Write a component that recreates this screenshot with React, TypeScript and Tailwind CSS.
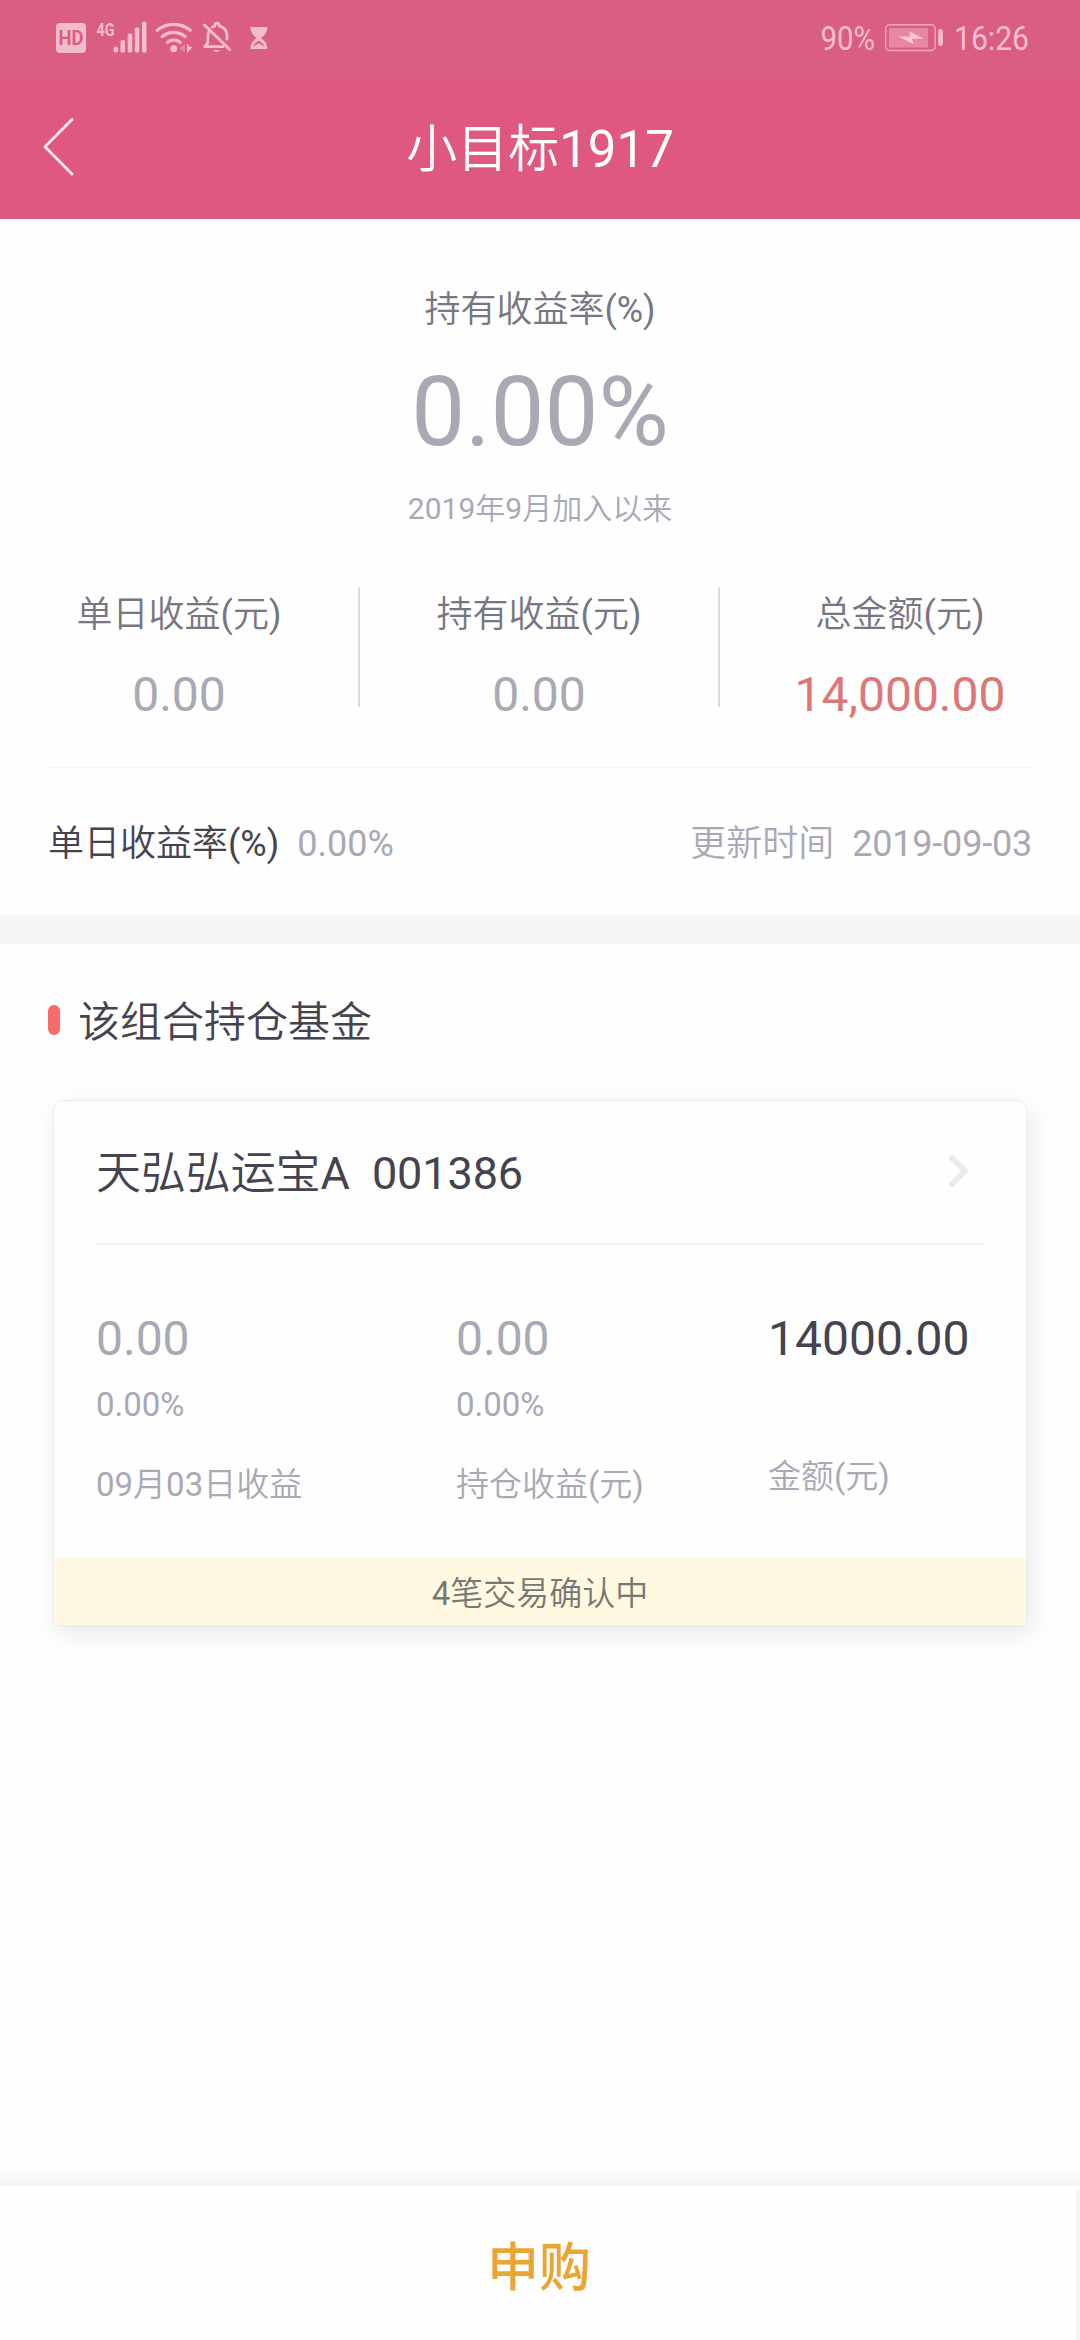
import React from "react";

interface Summary {
  label: string;
  value: string;
  highlight?: boolean;
}

const summaries: Summary[] = [
  { label: "单日收益(元)", value: "0.00" },
  { label: "持有收益(元)", value: "0.00" },
  { label: "总金额(元)", value: "14,000.00", highlight: true },
];

function StatusBar() {
  return (
    <div className="flex h-[77px] items-start justify-between bg-[#da5e82] text-[#f9bdd0]">
      <svg width="300" height="77" viewBox="0 0 300 77" fill="currentColor">
        <rect x="56" y="23" width="30" height="30" rx="4" fill="#f3bccd" />
        <text
          x="58.5"
          y="45"
          fontSize="19.5"
          fontWeight="700"
          textLength="25"
          lengthAdjust="spacingAndGlyphs"
          fill="#da5e82"
        >
          HD
        </text>
        <text
          x="96.5"
          y="35.5"
          fontSize="18.5"
          fontWeight="700"
          textLength="18"
          lengthAdjust="spacingAndGlyphs"
        >
          4G
        </text>
        {/* Signal bars */}
        <rect x="113.5" y="46.5" width="4.5" height="6" rx="2" />
        <rect x="120.5" y="40" width="4.5" height="12.5" rx="1.5" />
        <rect x="127.7" y="33.5" width="4.5" height="19" rx="1.5" />
        <rect x="134.8" y="27.5" width="4.5" height="25" rx="1.5" />
        <rect x="142" y="21.5" width="4.5" height="31" rx="1.5" />
        {/* Wifi */}
        <g fill="none" stroke="currentColor" strokeWidth="3.2" strokeLinecap="round">
          <path d="M157.2 30.3a26 26 0 0 1 33 0" />
          <path d="M162.2 36.6a18 18 0 0 1 23 0" />
          <path d="M167.5 42.2a10.5 10.5 0 0 1 12.6 0" />
        </g>
        <circle cx="173.7" cy="48.7" r="3.4" />
        <path d="M185 44v8.5l-6-4.2z" opacity="0.4" />
        <path d="M187 43.500l2.500 3.500h3l-2.500 3-3 3z" />
        {/* Muted bell */}
        <g
          fill="none"
          stroke="currentColor"
          strokeWidth="2.8"
          strokeLinecap="round"
          strokeLinejoin="round"
        >
          <path d="M204.6 25l25 24.5" />
          <path d="M209 31.5c-1 2-1.2 4-1.2 6v5.500l-3 3.700h18" />
          <path d="M212.2 27.2l2.5-1.300c.2-2.200 1.200-2.700 2.300-2.700s2.100.5 2.300 2.700c4.800 1.500 7.700 5 7.700 10v3.300" />
        </g>
        <path d="M213.5 50h6.5c-1 2.600-5.500 2.600-6.500 0z" />
        {/* Hourglass */}
        <g fill="#f3bccd">
          <path d="M250.5 27h16.7v1.500c-.6 5-3.300 7.600-6.400 9.500 3.100 2 5.800 4.600 6.400 9.500V49h-16.700v-1.500c.6-4.900 3.300-7.500 6.400-9.500-3.100-1.900-5.800-4.500-6.400-9.500z" />
          <path
            d="M253.5 46.500c.7-2.800 2.500-4.200 5.300-5.800 2.900 1.600 4.700 3 5.400 5.800l-5.400-3.300z"
            fill="#da5e82"
          />
        </g>
      </svg>

      <svg width="300" height="77" viewBox="0 0 300 77" fill="currentColor">
        <text
          x="40.5"
          y="50"
          fontSize="34"
          textLength="54.5"
          lengthAdjust="spacingAndGlyphs"
        >
          90%
        </text>
        <rect
          x="105.7"
          y="24.7"
          width="49.5"
          height="25.8"
          rx="4"
          fill="none"
          stroke="currentColor"
          strokeWidth="1.4"
          opacity="0.8"
        />
        <rect x="109" y="28" width="39" height="19.5" fill="#e787a4" />
        <path d="M118.5 36.500H130.5l-1.500-5.500 14.500 7.800H132l1.500 5.400z" fill="#fbc6d6" />
        <rect x="158.2" y="29" width="4.6" height="17" rx="2" />
        <text
          x="174"
          y="50"
          fontSize="34"
          textLength="75"
          lengthAdjust="spacingAndGlyphs"
        >
          16:26
        </text>
      </svg>
    </div>
  );
}

function Header() {
  return (
    <div className="flex h-[142px] items-center bg-[#df587f] text-white">
      <svg
        className="ml-[41px]"
        width="34"
        height="62"
        viewBox="0 0 34 62"
        fill="none"
        stroke="#ffe9f1"
        strokeWidth="2.8"
        strokeLinecap="round"
        strokeLinejoin="round"
      >
        <path d="M31 2.500L4 29.700L31 57" />
      </svg>
      <h1 className="flex-1 pt-[4px] pr-[75px] text-center text-[51px] leading-[60px]">
        小目标1917
      </h1>
    </div>
  );
}

function Overview() {
  return (
    <section className="h-[696px] pt-[67px]">
      <div className="flex flex-col items-center">
        <p className="text-[36px] leading-[48px] text-[#787682]">持有收益率(%)</p>
        <p className="mt-[23px] text-[96px] leading-[110px] text-[#a9a8b5]">0.00%</p>
        <p className="mt-5 text-[30px] leading-[44px] text-[#a9a8b5]">2019年9月加入以来</p>
      </div>

      <div className="mt-14 grid grid-cols-3 grid-rows-[120px]">
        {summaries.map((item) => (
          <div
            key={item.label}
            className="border-r-2 border-[#dddddf] pt-[4px] text-center last:border-r-0"
          >
            <p className="text-[36px] leading-[48px] text-[#787682]">{item.label}</p>
            <p
              className={
                item.highlight
                  ? "mt-[31px] text-[48px] leading-[50px] text-[#dd7777]"
                  : "mt-[31px] text-[48px] leading-[50px] text-[#a9a8b5]"
              }
            >
              {item.value}
            </p>
          </div>
        ))}
      </div>

      <div className="mx-12 mt-[60px] flex h-[148px] items-center justify-between border-t border-[#f5f5f5] pt-[5px] text-[36px] text-[#a9a8b5]">
        <p className="flex gap-[18px]">
          <span className="text-[#45434f]">单日收益率(%)</span>
          <span>0.00%</span>
        </p>
        <p className="flex gap-[18px]">
          <span>更新时间</span>
          <span className="tracking-[-0.2px]">2019-09-03</span>
        </p>
      </div>
    </section>
  );
}

function FundCard() {
  return (
    <div className="mx-[53px] mt-[48px] h-[526px] overflow-hidden rounded-t-[10px] rounded-b-[5px] border border-[#ededed] shadow-[4px_8px_24px_rgba(0,0,0,0.09)]">
      <div className="mr-[41px] ml-[42px] flex h-[144px] items-center justify-between border-b-2 border-[#f4f4f4] pt-[4px]">
        <h3 className="text-[45px] leading-[60px] tracking-[-0.1px] whitespace-pre text-[#45434f]">
          {"天弘弘运宝A  001386"}
        </h3>
        <svg
          className="mr-[15px] mb-[7px]"
          width="22"
          height="34"
          viewBox="0 0 22 34"
          fill="none"
          stroke="#ebebeb"
          strokeWidth="6"
          strokeLinecap="round"
          strokeLinejoin="round"
        >
          <path d="M4 4L17 17L4 30" />
        </svg>
      </div>

      <div className="ml-[42px] grid h-[313px] grid-cols-[360px_312px_1fr] pt-[64px] text-[33px] leading-[40px] text-[#a9a8b5]">
        <div>
          <p className="text-[48px] leading-[60px]">0.00</p>
          <p className="mt-4">0.00%</p>
          <p className="mt-10">09月03日收益</p>
        </div>
        <div>
          <p className="text-[48px] leading-[60px]">0.00</p>
          <p className="mt-4">0.00%</p>
          <p className="mt-10">持仓收益(元)</p>
        </div>
        <div>
          <p className="text-[48px] leading-[60px] text-[#45434f]">14000.00</p>
          <p className="mt-[88px]">金额(元)</p>
        </div>
      </div>

      <div className="flex h-[67px] items-center justify-center bg-[#fff9e2] pt-[4px] text-[33px] text-[#787774]">
        4笔交易确认中
      </div>
    </div>
  );
}

export default function App() {
  return (
    <div className="flex h-[2340px] w-[1080px] flex-col bg-[#fefefe] font-['Roboto','Noto_Sans_CJK_SC_DemiLight','Noto_Sans_CJK_SC',sans-serif]">
      <StatusBar />
      <Header />
      <Overview />

      <section className="flex-1 border-t-[29px] border-[#f5f5f5] pt-[48px]">
        <div className="ml-12 flex h-[60px] items-center">
          <span className="mb-[4px] h-[30px] w-[12px] rounded-full bg-[#f56c6a]" />
          <h2 className="ml-[18px] pt-[2px] text-[42px] leading-[60px] text-[#45434f]">
            该组合持仓基金
          </h2>
        </div>
        <FundCard />
      </section>

      <div className="h-[16px] bg-linear-to-b from-[#fefefe] to-[#f4f4f4]" />
      <div className="flex h-[154px] pt-[4px]">
        <button className="flex-1 pt-[8px] pl-[2px] font-['Roboto','Noto_Sans_CJK_SC',sans-serif] text-[52px] font-medium text-[#eaa535]">
          申购
        </button>
        <div className="w-[4px] bg-[#f5f5f5]" />
      </div>
    </div>
  );
}
